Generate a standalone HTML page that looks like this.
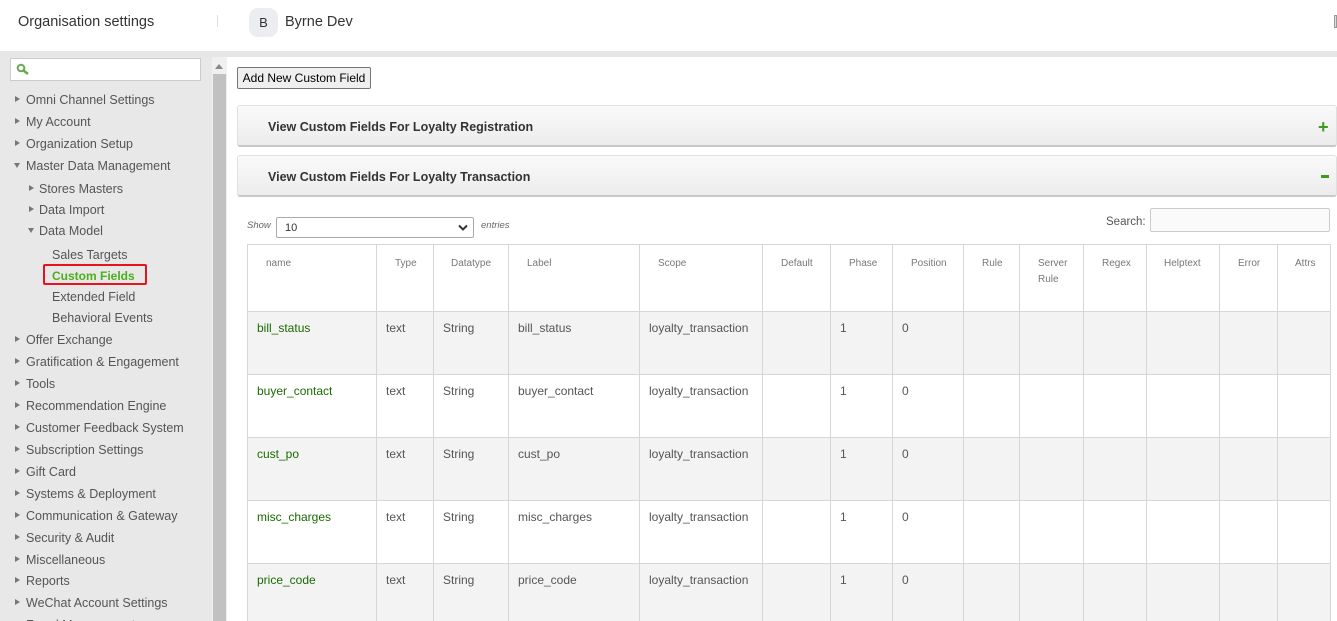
<!DOCTYPE html>
<html><head><meta charset="utf-8"><style>
*{margin:0;padding:0;box-sizing:border-box}
html,body{width:1337px;height:621px;overflow:hidden}
body{background:#fff;font-family:"Liberation Sans",sans-serif;position:relative}
.a{position:absolute;white-space:nowrap}
#hdr{position:absolute;left:0;top:0;width:1337px;height:51px;background:#fff}
#bar{position:absolute;left:0;top:51px;width:1337px;height:6px;background:#e6e6e6}
#side{position:absolute;left:0;top:57px;width:212px;height:564px;background:#e8e8e8}
#sb{position:absolute;left:212px;top:57px;width:15px;height:564px;background:#f0f0f0}
#thumb{position:absolute;left:213px;top:74px;width:13px;height:547px;background:#c1c1c1}
.si{position:absolute;font-size:12.5px;color:#555;line-height:16px;white-space:nowrap}
.tri{position:absolute;width:0;height:0;border-left:5px solid #777;border-top:3.5px solid transparent;border-bottom:3.5px solid transparent}
.trd{position:absolute;width:0;height:0;border-top:5px solid #777;border-left:3.5px solid transparent;border-right:3.5px solid transparent}
.acc{position:absolute;left:237px;width:1100px;height:42px;border:1px solid #e0e0e0;border-bottom:2px solid #c8c8c8;border-radius:3px;background:linear-gradient(#fafafa,#ececec);font-size:12.5px;font-weight:bold;color:#333}
.acc span{position:absolute;left:30px;top:14px}
table{position:absolute;left:247px;top:244px;border-collapse:collapse;table-layout:fixed}
td,th{border:1px solid #d6d6d6;vertical-align:top;text-align:left}
th{height:67px;font-weight:normal;font-size:10px;color:#777;padding:11px 0 0 0;line-height:16px}
td{height:63px;font-size:12px;color:#555;padding:9px 0 0 9px}
tr.g td{background:#f3f3f3}
td.n{color:#1a6a00}
</style></head><body>
<div id="hdr">
<div class="a" style="left:18px;top:14px;font-size:14.5px;color:#333">Organisation settings</div>
<div class="a" style="left:217px;top:15px;width:1px;height:12px;background:#ddd"></div>
<div class="a" style="left:249px;top:8px;width:29px;height:29px;border-radius:9px;background:#ebedf0;font-size:13px;color:#333;text-align:center;line-height:29px">B</div>
<div class="a" style="left:285px;top:14px;font-size:14.5px;color:#333">Byrne Dev</div>
<div class="a" style="left:1334px;top:15px;width:3px;height:13px;border:1px solid #999;background:#dde"></div>
</div>
<div id="bar"></div>
<div id="side">
<div class="a" style="left:10px;top:1px;width:191px;height:23px;background:#fff;border:1px solid #ccc"></div>
<svg class="a" style="left:16px;top:6px" width="16" height="14" viewBox="0 0 16 14"><circle cx="5" cy="5" r="3.3" fill="none" stroke="#6aa84f" stroke-width="2"/><line x1="7.5" y1="7.5" x2="12" y2="11" stroke="#6aa84f" stroke-width="2.5"/></svg>
</div>
<div id="sb"></div>
<div class="a" style="left:215px;top:64px;width:0;height:0;border-bottom:5px solid #888;border-left:4px solid transparent;border-right:4px solid transparent"></div>
<div id="thumb"></div>

<div class="tri" style="left:15px;top:96px"></div><div class="si" style="left:26px;top:92px">Omni Channel Settings</div>
<div class="tri" style="left:15px;top:118px"></div><div class="si" style="left:26px;top:114px">My Account</div>
<div class="tri" style="left:15px;top:140px"></div><div class="si" style="left:26px;top:136px">Organization Setup</div>
<div class="trd" style="left:14px;top:163px"></div><div class="si" style="left:26px;top:158px">Master Data Management</div>
<div class="tri" style="left:29px;top:185px"></div><div class="si" style="left:39px;top:181px">Stores Masters</div>
<div class="tri" style="left:29px;top:206px"></div><div class="si" style="left:39px;top:202px">Data Import</div>
<div class="trd" style="left:28px;top:228px"></div><div class="si" style="left:39px;top:223px">Data Model</div>
<div class="si" style="left:52px;top:247px">Sales Targets</div>
<div class="a" style="left:43px;top:264px;width:104px;height:21px;border:2px solid #e8141c;border-radius:2px"></div>
<div class="si" style="left:52px;top:268px;color:#4caf1a;font-weight:bold;font-size:12px">Custom Fields</div>
<div class="si" style="left:52px;top:289px">Extended Field</div>
<div class="si" style="left:52px;top:310px">Behavioral Events</div>
<div class="tri" style="left:15px;top:336px"></div><div class="si" style="left:26px;top:332px">Offer Exchange</div>
<div class="tri" style="left:15px;top:358px"></div><div class="si" style="left:26px;top:354px">Gratification &amp; Engagement</div>
<div class="tri" style="left:15px;top:380px"></div><div class="si" style="left:26px;top:376px">Tools</div>
<div class="tri" style="left:15px;top:402px"></div><div class="si" style="left:26px;top:398px">Recommendation Engine</div>
<div class="tri" style="left:15px;top:424px"></div><div class="si" style="left:26px;top:420px">Customer Feedback System</div>
<div class="tri" style="left:15px;top:446px"></div><div class="si" style="left:26px;top:442px">Subscription Settings</div>
<div class="tri" style="left:15px;top:468px"></div><div class="si" style="left:26px;top:464px">Gift Card</div>
<div class="tri" style="left:15px;top:490px"></div><div class="si" style="left:26px;top:486px">Systems &amp; Deployment</div>
<div class="tri" style="left:15px;top:512px"></div><div class="si" style="left:26px;top:508px">Communication &amp; Gateway</div>
<div class="tri" style="left:15px;top:534px"></div><div class="si" style="left:26px;top:530px">Security &amp; Audit</div>
<div class="tri" style="left:15px;top:556px"></div><div class="si" style="left:26px;top:552px">Miscellaneous</div>
<div class="tri" style="left:15px;top:577px"></div><div class="si" style="left:26px;top:573px">Reports</div>
<div class="tri" style="left:15px;top:599px"></div><div class="si" style="left:26px;top:595px">WeChat Account Settings</div>
<div class="tri" style="left:15px;top:621px"></div><div class="si" style="left:26px;top:617px">Fraud Management</div>

<div class="a" style="left:237px;top:67px;width:134px;height:22px;border:1px solid #767676;border-radius:2px;background:#efefef;font-size:12px;color:#000;text-align:center;line-height:20px">Add New Custom Field</div>
<div class="acc" style="top:105px"><span>View Custom Fields For Loyalty Registration</span><div class="a" style="left:1080px;top:11px;font-size:18px;color:#3c9a1c;font-weight:bold">+</div></div>
<div class="acc" style="top:155px"><span>View Custom Fields For Loyalty Transaction</span><div class="a" style="left:1083px;top:19px;width:8px;height:3px;background:#3c9a1c"></div></div>

<div class="a" style="left:247px;top:220px;font-size:9.5px;color:#666;font-style:italic">Show</div>
<div class="a" style="left:276px;top:217px;width:198px;height:21px;border:1px solid #aaa;border-radius:2px;background:#fff;font-size:11px;color:#333;padding:4px 0 0 8px">10</div>
<svg class="a" style="left:458px;top:224px" width="10" height="8" viewBox="0 0 10 8"><path d="M1 1.5L5 5.5L9 1.5" fill="none" stroke="#333" stroke-width="2"/></svg>
<div class="a" style="left:481px;top:220px;font-size:9.5px;color:#666;font-style:italic">entries</div>
<div class="a" style="left:1106px;top:216px;font-size:11.5px;color:#555">Search:</div>
<div class="a" style="left:1150px;top:208px;width:180px;height:24px;border:1px solid #ccc;border-radius:2px;background:#fafafa"></div>

<table>
<colgroup><col style="width:129px"><col style="width:57px"><col style="width:75px"><col style="width:131px"><col style="width:123px"><col style="width:68px"><col style="width:62px"><col style="width:71px"><col style="width:56px"><col style="width:64px"><col style="width:63px"><col style="width:73px"><col style="width:58px"><col style="width:53px"></colgroup>
<tr><th style="padding-left:18px">name</th><th style="padding-left:18px">Type</th><th style="padding-left:17px">Datatype</th><th style="padding-left:18px">Label</th><th style="padding-left:18px">Scope</th><th style="padding-left:18px">Default</th><th style="padding-left:18px">Phase</th><th style="padding-left:18px">Position</th><th style="padding-left:18px">Rule</th><th style="padding-left:18px">Server<br>Rule</th><th style="padding-left:18px">Regex</th><th style="padding-left:17px">Helptext</th><th style="padding-left:18px">Error</th><th style="padding-left:17px">Attrs</th></tr>
<tr class="g"><td class="n">bill_status</td><td>text</td><td>String</td><td>bill_status</td><td>loyalty_transaction</td><td></td><td>1</td><td>0</td><td></td><td></td><td></td><td></td><td></td><td></td></tr>
<tr><td class="n">buyer_contact</td><td>text</td><td>String</td><td>buyer_contact</td><td>loyalty_transaction</td><td></td><td>1</td><td>0</td><td></td><td></td><td></td><td></td><td></td><td></td></tr>
<tr class="g"><td class="n">cust_po</td><td>text</td><td>String</td><td>cust_po</td><td>loyalty_transaction</td><td></td><td>1</td><td>0</td><td></td><td></td><td></td><td></td><td></td><td></td></tr>
<tr><td class="n">misc_charges</td><td>text</td><td>String</td><td>misc_charges</td><td>loyalty_transaction</td><td></td><td>1</td><td>0</td><td></td><td></td><td></td><td></td><td></td><td></td></tr>
<tr class="g"><td class="n">price_code</td><td>text</td><td>String</td><td>price_code</td><td>loyalty_transaction</td><td></td><td>1</td><td>0</td><td></td><td></td><td></td><td></td><td></td><td></td></tr>
</table>
</body></html>
